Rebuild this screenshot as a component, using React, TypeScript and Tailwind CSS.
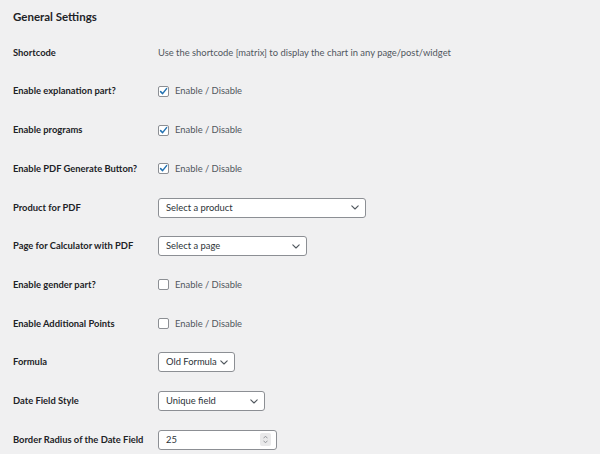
import { type ReactNode } from 'react';

const font = { fontFamily: 'Lato, "Noto Sans", sans-serif' };

function Chevron() {
  return (
    <svg width="8" height="5" viewBox="0 0 8 5" fill="none" className="shrink-0">
      <path d="M0.8 0.8L4 4L7.2 0.8" stroke="#50575e" strokeWidth="1.1" strokeLinecap="round" strokeLinejoin="round" />
    </svg>
  );
}

function Select({ label, width }: { label: string; width: string }) {
  return (
    <div
      className={`${width} h-[20px] bg-white border border-[#8c8f94] rounded-[3px] flex items-center justify-between pl-[7px] pr-[6px] text-[9.4px] text-[#2c3338] whitespace-nowrap`}
    >
      <span>{label}</span>
      <Chevron />
    </div>
  );
}

function Checkbox({ checked }: { checked: boolean }) {
  return (
    <label className="flex items-center gap-[6px] text-[9.4px] text-[#50575e] whitespace-nowrap">
      <span className="size-[11px] bg-white border border-[#8c8f94] rounded-[2px] flex items-center justify-center">
        {checked && (
          <svg width="9" height="9" viewBox="0 0 9 9" fill="none">
            <path d="M1.6 4.6L3.6 6.6L7.6 1.6" stroke="#2271b1" strokeWidth="1.5" strokeLinecap="round" strokeLinejoin="round" />
          </svg>
        )}
      </span>
      Enable / Disable
    </label>
  );
}

function Row({ label, children }: { label: string; children: ReactNode }) {
  return (
    <div className="h-[38.7px] flex items-center">
      <div className="w-[145px] shrink-0 text-[9.4px] font-bold text-[#1d2327] whitespace-nowrap">{label}</div>
      <div className="flex items-center">{children}</div>
    </div>
  );
}

export default function App() {
  return (
    <div className="min-h-screen w-[600px] h-[454px] overflow-hidden bg-[#f0f0f1] px-[13px]" style={font}>
      <div className="h-[33.5px] flex items-center">
        <h2 className="text-[11.5px] font-bold text-[#1d2327]">General Settings</h2>
      </div>

      <Row label="Shortcode">
        <span className="text-[9.4px] text-[#50575e] whitespace-nowrap">
          Use the shortcode [matrix] to display the chart in any page/post/widget
        </span>
      </Row>
      <Row label="Enable explanation part?">
        <Checkbox checked />
      </Row>
      <Row label="Enable programs">
        <Checkbox checked />
      </Row>
      <Row label="Enable PDF Generate Button?">
        <Checkbox checked />
      </Row>
      <Row label="Product for PDF">
        <Select label="Select a product" width="w-[208px]" />
      </Row>
      <Row label="Page for Calculator with PDF">
        <Select label="Select a page" width="w-[149px]" />
      </Row>
      <Row label="Enable gender part?">
        <Checkbox checked={false} />
      </Row>
      <Row label="Enable Additional Points">
        <Checkbox checked={false} />
      </Row>
      <Row label="Formula">
        <Select label="Old Formula" width="w-[77px]" />
      </Row>
      <Row label="Date Field Style">
        <Select label="Unique field" width="w-[107px]" />
      </Row>
      <Row label="Border Radius of the Date Field">
        <div className="w-[119px] h-[20px] bg-white border border-[#8c8f94] rounded-[3px] flex items-center justify-between pl-[7px] pr-[5px] text-[9.4px] text-[#2c3338]">
          <span>25</span>
          <span className="w-[11px] h-[13px] bg-[#e9e9ea] rounded-[2px] flex items-center justify-center">
            <svg width="5" height="9" viewBox="0 0 5 9" fill="none">
              <path d="M0.8 3L2.5 1.2L4.2 3" stroke="#8c8f94" strokeWidth="0.9" strokeLinecap="round" strokeLinejoin="round" />
              <path d="M0.8 6L2.5 7.8L4.2 6" stroke="#8c8f94" strokeWidth="0.9" strokeLinecap="round" strokeLinejoin="round" />
            </svg>
          </span>
        </div>
      </Row>
    </div>
  );
}
